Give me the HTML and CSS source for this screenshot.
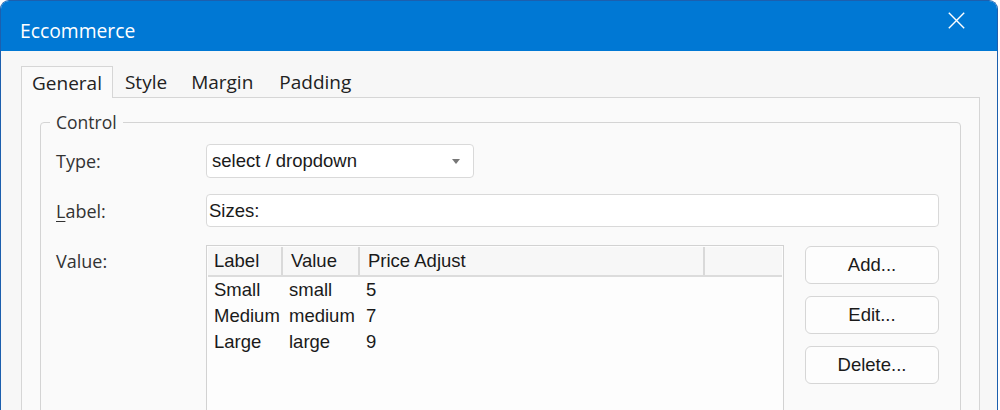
FILE: index.html
```html
<!DOCTYPE html>
<html>
<head>
<meta charset="utf-8">
<link rel="stylesheet" href="styles.css">
</head>
<body>
<div class="window">
  <div class="titlebar">
    <span class="title">Eccommerce</span>
    <span class="close">
      <svg width="17" height="17" viewBox="0 0 17 17"><path d="M0.8 0.8 L16.2 16.2 M16.2 0.8 L0.8 16.2" stroke="#fff" stroke-width="1.4" fill="none"/></svg>
    </span>
  </div>
  <div class="client">
    <div class="tabs">
      <div class="tab active">General</div>
      <div class="tab">Style</div>
      <div class="tab">Margin</div>
      <div class="tab">Padding</div>
    </div>
    <div class="panel">
      <fieldset class="group">
        <legend class="legend">Control</legend>
        <div class="form">
          <div class="lbl">Type:</div>
          <div class="select"><span>select / dropdown</span><span class="arrow"></span></div>
          <div class="lbl"><u>L</u>abel:</div>
          <div class="input">Sizes:</div>
          <div class="lbl vlbl">Value:</div>
          <div class="valuerow">
            <div class="list">
              <div class="lhead">
                <div class="hcell">Label</div>
                <div class="hcell">Value</div>
                <div class="hcell">Price Adjust</div>
                <div class="hcell last"></div>
              </div>
              <div class="lrow"><div class="cell">Small</div><div class="cell">small</div><div class="cell">5</div><div class="cell"></div></div>
              <div class="lrow"><div class="cell">Medium</div><div class="cell">medium</div><div class="cell">7</div><div class="cell"></div></div>
              <div class="lrow"><div class="cell">Large</div><div class="cell">large</div><div class="cell">9</div><div class="cell"></div></div>
            </div>
            <div class="buttons">
              <div class="btn">Add...</div>
              <div class="btn">Edit...</div>
              <div class="btn">Delete...</div>
            </div>
          </div>
        </div>
      </fieldset>
    </div>
  </div>
</div>
</body>
</html>
```
FILE: styles.css
```css
html, body {
  margin: 0;
  padding: 0;
  background: #ffffff;
  height: 410px;
  overflow: hidden;
}
.window {
  width: 998px;
  box-sizing: border-box;
  height: 440px;
  border: 1px solid #1c5fae;
  border-bottom: none;
  border-radius: 9px 9px 0 0;
  overflow: hidden;
  background: #f7f7f7;
  font-family: "Open Sans", "Noto Sans", sans-serif;
  color: #222;
}
.titlebar {
  height: 50px;
  box-sizing: border-box;
  background: #0078d4;
  display: flex;
  align-items: flex-start;
  justify-content: space-between;
  padding: 0 32px 0 19px;
}
.title {
  color: #fff;
  font-size: 19.3px;
  line-height: 26px;
  padding-top: 17px;
}
.close {
  display: flex;
  width: 17px;
  height: 17px;
  margin-top: 11px;
}
.client {
  padding: 15px 17px 0 20px;
}
.tabs {
  display: flex;
  height: 31px;
  align-items: flex-start;
}
.tab {
  height: 32px;
  box-sizing: border-box;
  padding: 0 12px;
  font-size: 19px;
  line-height: 32px;
  color: #222;
}
.tab.active {
  padding: 0 10px;
  border: 1px solid #d6d6d6;
  border-bottom: none;
  background: #fafafa;
  position: relative;
  z-index: 1;
}
.tab:nth-child(3) {
  padding-right: 14px;
}
.panel {
  border: 1px solid #d6d6d6;
  background: #fafafa;
  padding: 13px 18px 0 18px;
  height: 340px;
}
.group {
  margin: 0;
  padding: 11px 21px 0 15px;
  border: 1px solid #d4d4d4;
  border-radius: 4px;
  height: 320px;
  box-sizing: border-box;
}
.legend {
  padding: 0 6px;
  margin-left: -6px;
  font-size: 17.5px;
  line-height: 22px;
  color: #333;
}
.form {
  display: grid;
  grid-template-columns: 150px 1fr;
  row-gap: 16px;
}
.lbl {
  font-size: 18px;
  line-height: 34px;
  color: #333;
}
.lbl u {
  text-decoration-thickness: 1px;
  text-underline-offset: 3px;
}
.select, .input {
  box-sizing: border-box;
  background: #fff;
  border: 1px solid #d9d9d9;
  border-radius: 4px;
  font-family: "Liberation Sans", Arial, sans-serif;
  font-size: 18.5px;
  color: #1a1a1a;
}
.select {
  width: 268px;
  height: 34px;
  display: flex;
  align-items: center;
  justify-content: space-between;
  padding: 0 13px 0 5px;
}
.arrow {
  width: 0;
  height: 0;
  border-left: 4.5px solid transparent;
  border-right: 4.5px solid transparent;
  border-top: 5px solid #777;
}
.input {
  height: 33px;
  line-height: 31px;
  padding: 0 2px;
}
.valuerow {
  display: flex;
  gap: 21px;
  margin-top: 1px;
}
.list {
  width: 578px;
  height: 200px;
  box-sizing: border-box;
  border: 1px solid #d2d2d2;
  padding: 1px;
  background: #fdfdfd;
  font-family: "Liberation Sans", Arial, sans-serif;
  font-size: 18.5px;
  color: #1a1a1a;
}
.lhead, .lrow {
  display: grid;
  grid-template-columns: 75px 77px 345px 1fr;
}
.lhead {
  background: #f7f7f7;
  border-bottom: 2px solid #dcdcdc;
  height: 30px;
  box-sizing: border-box;
}
.hcell {
  line-height: 28px;
  padding-left: 8px;
  border-right: 2px solid #d9d9d9;
}
.hcell:first-child {
  padding-left: 6px;
}
.hcell.last {
  border-right: none;
}
.lrow {
  height: 26px;
  line-height: 26px;
}
.lrow:first-of-type {
  margin-top: 1px;
}
.cell {
  padding-left: 6px;
  white-space: nowrap;
}
.buttons {
  display: flex;
  flex-direction: column;
  gap: 12px;
  padding-top: 1px;
}
.btn {
  width: 134px;
  height: 38px;
  box-sizing: border-box;
  border: 1px solid #d6d6d6;
  border-radius: 6px;
  background: #fdfdfd;
  display: flex;
  align-items: center;
  justify-content: center;
  font-family: "Liberation Sans", Arial, sans-serif;
  font-size: 18.5px;
  color: #1a1a1a;
}
```
